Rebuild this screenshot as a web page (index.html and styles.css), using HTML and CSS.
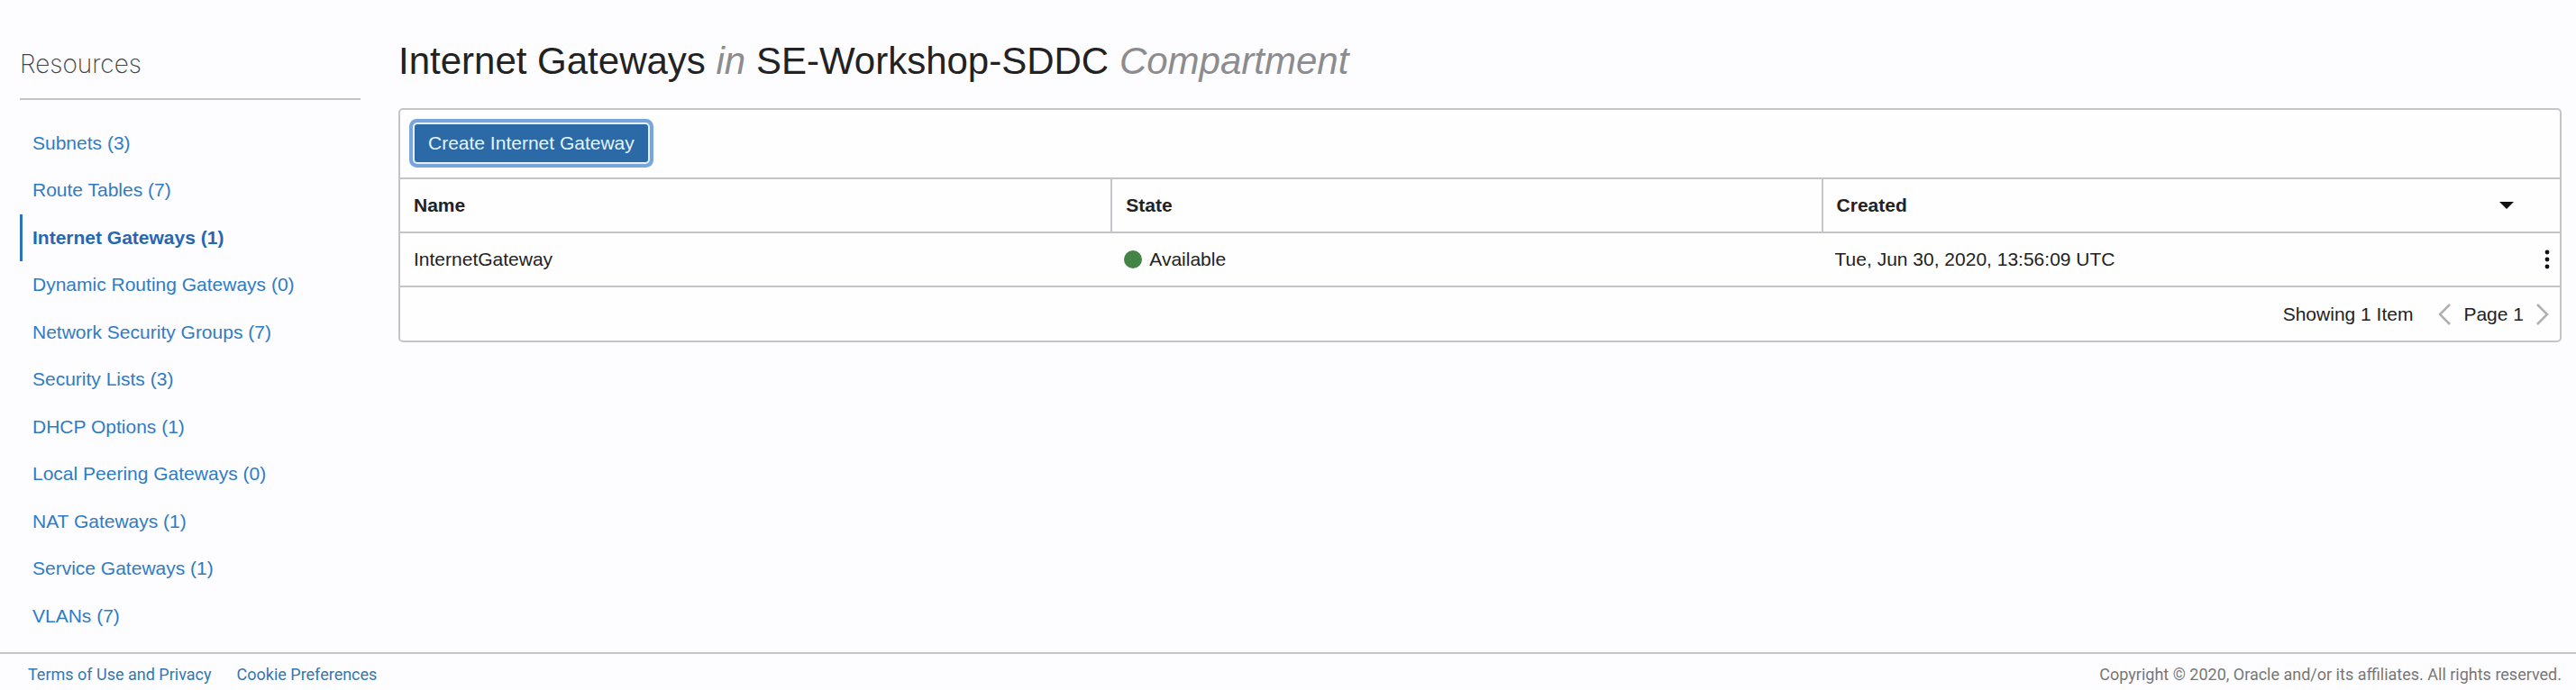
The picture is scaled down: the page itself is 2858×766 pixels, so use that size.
FILE: index.html
```html
<!DOCTYPE html>
<html lang="en">
<head>
<meta charset="utf-8">
<title>Internet Gateways</title>
<link rel="stylesheet" href="styles.css">
</head>
<body>
<div class="page">
  <div class="layout">
    <nav class="sidebar" aria-labelledby="resources-title">
      <h2 class="sidebar-title" id="resources-title">Resources</h2>
      <ul class="resource-list">
        <li><a href="#">Subnets (3)</a></li>
        <li><a href="#">Route Tables (7)</a></li>
        <li><a class="active" href="#" aria-current="page">Internet Gateways (1)</a></li>
        <li><a href="#">Dynamic Routing Gateways (0)</a></li>
        <li><a href="#">Network Security Groups (7)</a></li>
        <li><a href="#">Security Lists (3)</a></li>
        <li><a href="#">DHCP Options (1)</a></li>
        <li><a href="#">Local Peering Gateways (0)</a></li>
        <li><a href="#">NAT Gateways (1)</a></li>
        <li><a href="#">Service Gateways (1)</a></li>
        <li><a href="#">VLANs (7)</a></li>
      </ul>
    </nav>
    <main class="content">
      <h1 class="title">Internet Gateways <em>in</em> SE-Workshop-SDDC <em>Compartment</em></h1>
      <section class="panel">
        <div class="toolbar">
          <button class="create" type="button">Create Internet Gateway</button>
        </div>
        <table class="grid">
          <colgroup><col class="col-main"><col class="col-main"><col><col class="col-menu"></colgroup>
          <thead>
            <tr>
              <th scope="col">Name</th>
              <th scope="col">State</th>
              <th scope="col" colspan="2">
                <div class="sortable">Created
                  <button class="icon-button" type="button" aria-label="Sort by created">
                    <svg width="16" height="8" viewBox="0 0 16 8"><path d="M0 0h16L8 8z" fill="#111"/></svg>
                  </button>
                </div>
              </th>
            </tr>
          </thead>
          <tbody>
            <tr>
              <td>InternetGateway</td>
              <td><div class="state"><span class="dot"></span>Available</div></td>
              <td>Tue, Jun 30, 2020, 13:56:09 UTC</td>
              <td class="menu">
                <button class="icon-button" type="button" aria-label="Actions">
                  <svg width="6" height="22" viewBox="0 0 6 22" fill="#111"><circle cx="3" cy="3" r="2.4"/><circle cx="3" cy="11" r="2.4"/><circle cx="3" cy="19" r="2.4"/></svg>
                </button>
              </td>
            </tr>
          </tbody>
        </table>
        <div class="pager">
          <span class="showing">Showing 1 Item</span>
          <button class="icon-button" type="button" aria-label="Previous page">
            <svg width="14" height="24" viewBox="0 0 14 24"><path d="M13 1L2 12l11 11" fill="none" stroke="#b0b0b0" stroke-width="2.5"/></svg>
          </button>
          <span class="page-number">Page 1</span>
          <button class="icon-button" type="button" aria-label="Next page">
            <svg width="14" height="24" viewBox="0 0 14 24"><path d="M1 1l11 11L1 23" fill="none" stroke="#b0b0b0" stroke-width="2.5"/></svg>
          </button>
        </div>
      </section>
    </main>
  </div>
  <footer class="footer">
    <a href="#">Terms of Use and Privacy</a>
    <a href="#">Cookie Preferences</a>
    <span class="copyright">Copyright © 2020, Oracle and/or its affiliates. All rights reserved.</span>
  </footer>
</div>
</body>
</html>
```

FILE: styles.css
```css
* {
  box-sizing: border-box;
}

body {
  margin: 0;
  background: #fdfcff;
  color: #222;
  font: 21px/24px "Liberation Sans", Arial, sans-serif;
}

.page {
  display: flex;
  flex-direction: column;
  min-height: 100vh;
}

.layout {
  display: flex;
  flex: 1;
  gap: 42px;
  padding: 41px 16px 0 22px;
}

.sidebar {
  flex: none;
  width: 378px;
}

.sidebar-title {
  margin: 0;
  padding: 13px 0 21px;
  border-bottom: 2px solid #c3c3c6;
  color: #444;
  font: 200 28px/34px Inter, "Liberation Sans", sans-serif;
}

.resource-list {
  margin: 0;
  padding: 22px 0 0;
  list-style: none;
}

.resource-list li:nth-child(even) {
  padding-bottom: 1px;
}

.resource-list a {
  display: block;
  padding-left: 14px;
  color: #2f7cc4;
  line-height: 52px;
  text-decoration: none;
}

.resource-list .active {
  padding-left: 11px;
  border-left: 3px solid #2a73bf;
  color: #2468b4;
  font-weight: bold;
}

.content {
  flex: 1;
  min-width: 0;
}

.title {
  margin: 0 0 25px;
  font-size: 42px;
  font-weight: normal;
  line-height: 54px;
}

.title em {
  color: #8c8c8e;
}

.panel {
  border: 2px solid #c4c5c8;
  border-radius: 5px;
  background: #fefefe;
}

.toolbar {
  padding: 16px 16px 17px;
}

.create {
  display: block;
  height: 42px;
  padding: 0 15px;
  border: 0;
  border-radius: 3px;
  background: #2b6aa6;
  box-shadow: 0 0 0 2px #e6f0fa, 0 0 0 6px #78a6dc;
  color: #e6f4ff;
  font: inherit;
}

.grid {
  width: 100%;
  border-collapse: separate;
  border-spacing: 0;
  table-layout: fixed;
}

.col-main {
  width: 32.9%;
}

.col-menu {
  width: 32px;
}

.grid th,
.grid td {
  height: 60px;
  padding: 0 15px;
  border-top: 2px solid #c4c5c8;
  text-align: left;
}

.grid th + th {
  border-left: 2px solid #c4c5c8;
}

.grid .menu {
  padding: 0;
}

.sortable {
  display: flex;
  align-items: center;
  justify-content: space-between;
  padding-right: 36px;
}

.icon-button {
  display: block;
  padding: 0;
  border: 0;
  background: none;
}

.icon-button svg {
  display: block;
}

.menu .icon-button {
  margin-left: 15px;
}

.state {
  display: flex;
  align-items: center;
  gap: 8px;
}

.dot {
  width: 20px;
  height: 20px;
  border-radius: 50%;
  background: #438546;
}

.pager {
  display: flex;
  align-items: center;
  justify-content: flex-end;
  height: 61px;
  padding-right: 12px;
  border-top: 2px solid #c4c5c8;
}

.showing {
  margin-right: 28px;
}

.page-number {
  margin: 0 14px;
}

.footer {
  display: flex;
  gap: 28px;
  padding: 11px 16px 5px 31px;
  border-top: 2px solid #c4c5c8;
  color: #777;
  font: 18px/24px Roboto, "Liberation Sans", sans-serif;
}

.footer a {
  color: #3577ae;
  text-decoration: none;
}

.copyright {
  margin-left: auto;
}
```
